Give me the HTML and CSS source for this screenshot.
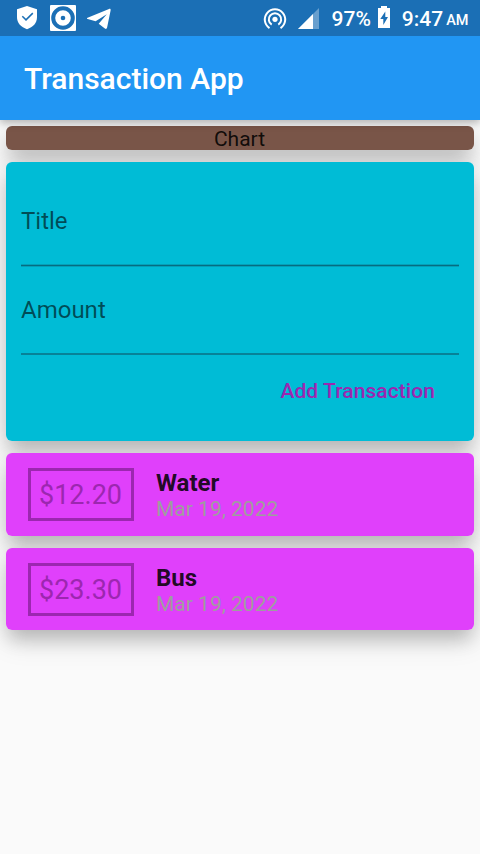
FILE: index.html
```html
<!DOCTYPE html>
<html lang="en">
<head>
<meta charset="utf-8">
<title>Transaction App</title>
<link rel="stylesheet" href="styles.css">
</head>
<body>
<header class="status-bar">
  <svg class="status-icons" width="120" height="36" viewBox="0 0 120 36" fill="none">
    <path fill="#fff" d="M27 6 37 9.200V17c0 6-4 10.300-10 12.200C21 27.300 17 23 17 17V9.200Z"/>
    <path stroke="#1b6fb5" stroke-width="1.500" d="m22.300 16.300 3.700 3.600 6.800-6.800"/>
    <rect x="50" y="5" width="26" height="26" rx="1" fill="#fff"/>
    <circle cx="63" cy="18" r="9.800" stroke="#1b6fb5" stroke-width="4"/>
    <circle cx="63" cy="18" r="2.300" fill="#1b6fb5"/>
    <path fill="#fff" d="M87.600 17.800 109 8.900c1.200-.4 1.900.1 1.600 1.600l-3.500 17c-.3 1.400-1.100 1.700-2.200 1.100l-6.200-4.900 8.100-9.500-11.200 7.100-8-2.300c-.9-.3-.9-.9 0-1.200Z"/>
  </svg>
  <div class="status-right">
    <svg width="24" height="36" viewBox="0 0 24 36" fill="none" stroke="#fff" stroke-width="2">
      <path d="M6.500 28.100A10.200 10.200 0 1 1 17.500 28.100"/>
      <path d="M8.700 24.600A6.200 6.200 0 1 1 15.300 24.600"/>
      <circle cx="12" cy="19.300" r="2.600" fill="#fff" stroke="none"/>
    </svg>
    <svg class="signal" width="22" height="36" viewBox="0 0 22 36">
      <path fill="#689fce" d="M21 8v21H0Z"/>
      <path fill="#fff" d="M15 14v15H0Z"/>
    </svg>
    <span class="battery-text">97%</span>
    <svg class="battery" width="12" height="36" viewBox="0 0 12 36">
      <path fill="#fff" d="M3 6h6v2h3v20H0V8h3Z"/>
      <path fill="#1b6fb5" d="M7.300 11.500 2.300 19h3v6l4.700-8H7.300Z"/>
    </svg>
    <span class="clock">9:47</span><span class="meridiem">AM</span>
  </div>
</header>
<div class="app-bar"><h1>Transaction App</h1></div>
<main>
  <section class="card chart">Chart</section>
  <section class="card form">
    <div class="field title-field">Title</div>
    <div class="field">Amount</div>
    <button class="add">Add Transaction</button>
  </section>
  <article class="card entry">
    <div class="price">$12.20</div>
    <div class="details"><div class="name">Water</div><div class="date">Mar 19, 2022</div></div>
  </article>
  <article class="card entry last">
    <div class="price">$23.30</div>
    <div class="details"><div class="name">Bus</div><div class="date">Mar 19, 2022</div></div>
  </article>
</main>
</body>
</html>
```
FILE: styles.css
```css
* { box-sizing: border-box; }
body {
  margin: 0;
  height: 854px;
  overflow: hidden;
  background: #fafafa;
  color: rgba(0, 0, 0, .87);
  font: 21px/24px Roboto, sans-serif;
}
.status-bar {
  display: flex;
  justify-content: space-between;
  position: relative;
  z-index: 2;
  height: 36px;
  padding-right: 11.5px;
  background: #1b6fb5;
  color: #fff;
}
.status-right {
  display: flex;
  line-height: 38px;
  font-weight: 500;
}
.signal { margin-left: 11px; }
.battery-text { margin-left: 12px; }
.battery { margin-left: 7px; }
.clock { margin-left: 12px; }
.meridiem { margin-left: 3px; font-size: 14.5px; line-height: 42px; }
.app-bar {
  display: flex;
  align-items: center;
  position: relative;
  z-index: 1;
  height: 84px;
  padding: 0 24px;
  background: #2196f3;
  color: #fff;
  box-shadow: 0 3px 8px rgba(0, 0, 0, .28);
}
h1 {
  margin: 2px 0 0;
  font-size: 30px;
  font-weight: 500;
  line-height: 36px;
}
main {
  display: flex;
  flex-direction: column;
  gap: 12px;
  padding: 6px;
  isolation: isolate;
}
.card { position: relative; border-radius: 6px; }
.card::before {
  content: "";
  position: absolute;
  inset: 0;
  z-index: -1;
  border-radius: 6px;
  box-shadow: 0 12px 18px -3px rgba(0, 0, 0, .17), 0 10px 28px rgba(0, 0, 0, .15);
}
.chart {
  height: 24px;
  padding-right: 1px;
  background: #795548;
  text-align: center;
  line-height: 26px;
}
.form {
  display: flex;
  flex-direction: column;
  height: 279px;
  padding: 15px;
  background: #00bcd6;
}
.field {
  height: 89px;
  padding-top: 30px;
  border-bottom: 2px solid #078298;
  color: rgba(0, 0, 0, .6);
  font-size: 24px;
  line-height: 28px;
}
.title-field {
  border-bottom: 0;
  background: linear-gradient(#04a0b8 0 1px, #066c80 1px 2px, #04a0b8 2px) 0 100% / 100% 3px no-repeat;
  height: 90px;
  margin-bottom: -1px;
}
.add {
  align-self: flex-end;
  margin: 24px 24px 0 0;
  padding: 0;
  border: 0;
  background: none;
  color: #9c27b0;
  font: 500 21px/25px Roboto, sans-serif;
  letter-spacing: .07px;
}
.entry {
  display: flex;
  align-items: flex-start;
  height: 83px;
  padding: 15px 0 0 22px;
  background: #e040fb;
}
.last { height: 82px; }
.price {
  width: 106px;
  height: 53px;
  padding: 8px 1px 0 0;
  border: 3px solid #9c27b0;
  color: #9c27b0;
  font-size: 27px;
  line-height: 32px;
  text-align: center;
}
.details { margin-left: 22px; padding-top: 1px; }
.name { font-size: 24px; font-weight: 700; line-height: 28px; }
.date { color: #9e9e9e; line-height: 25px; }
```
